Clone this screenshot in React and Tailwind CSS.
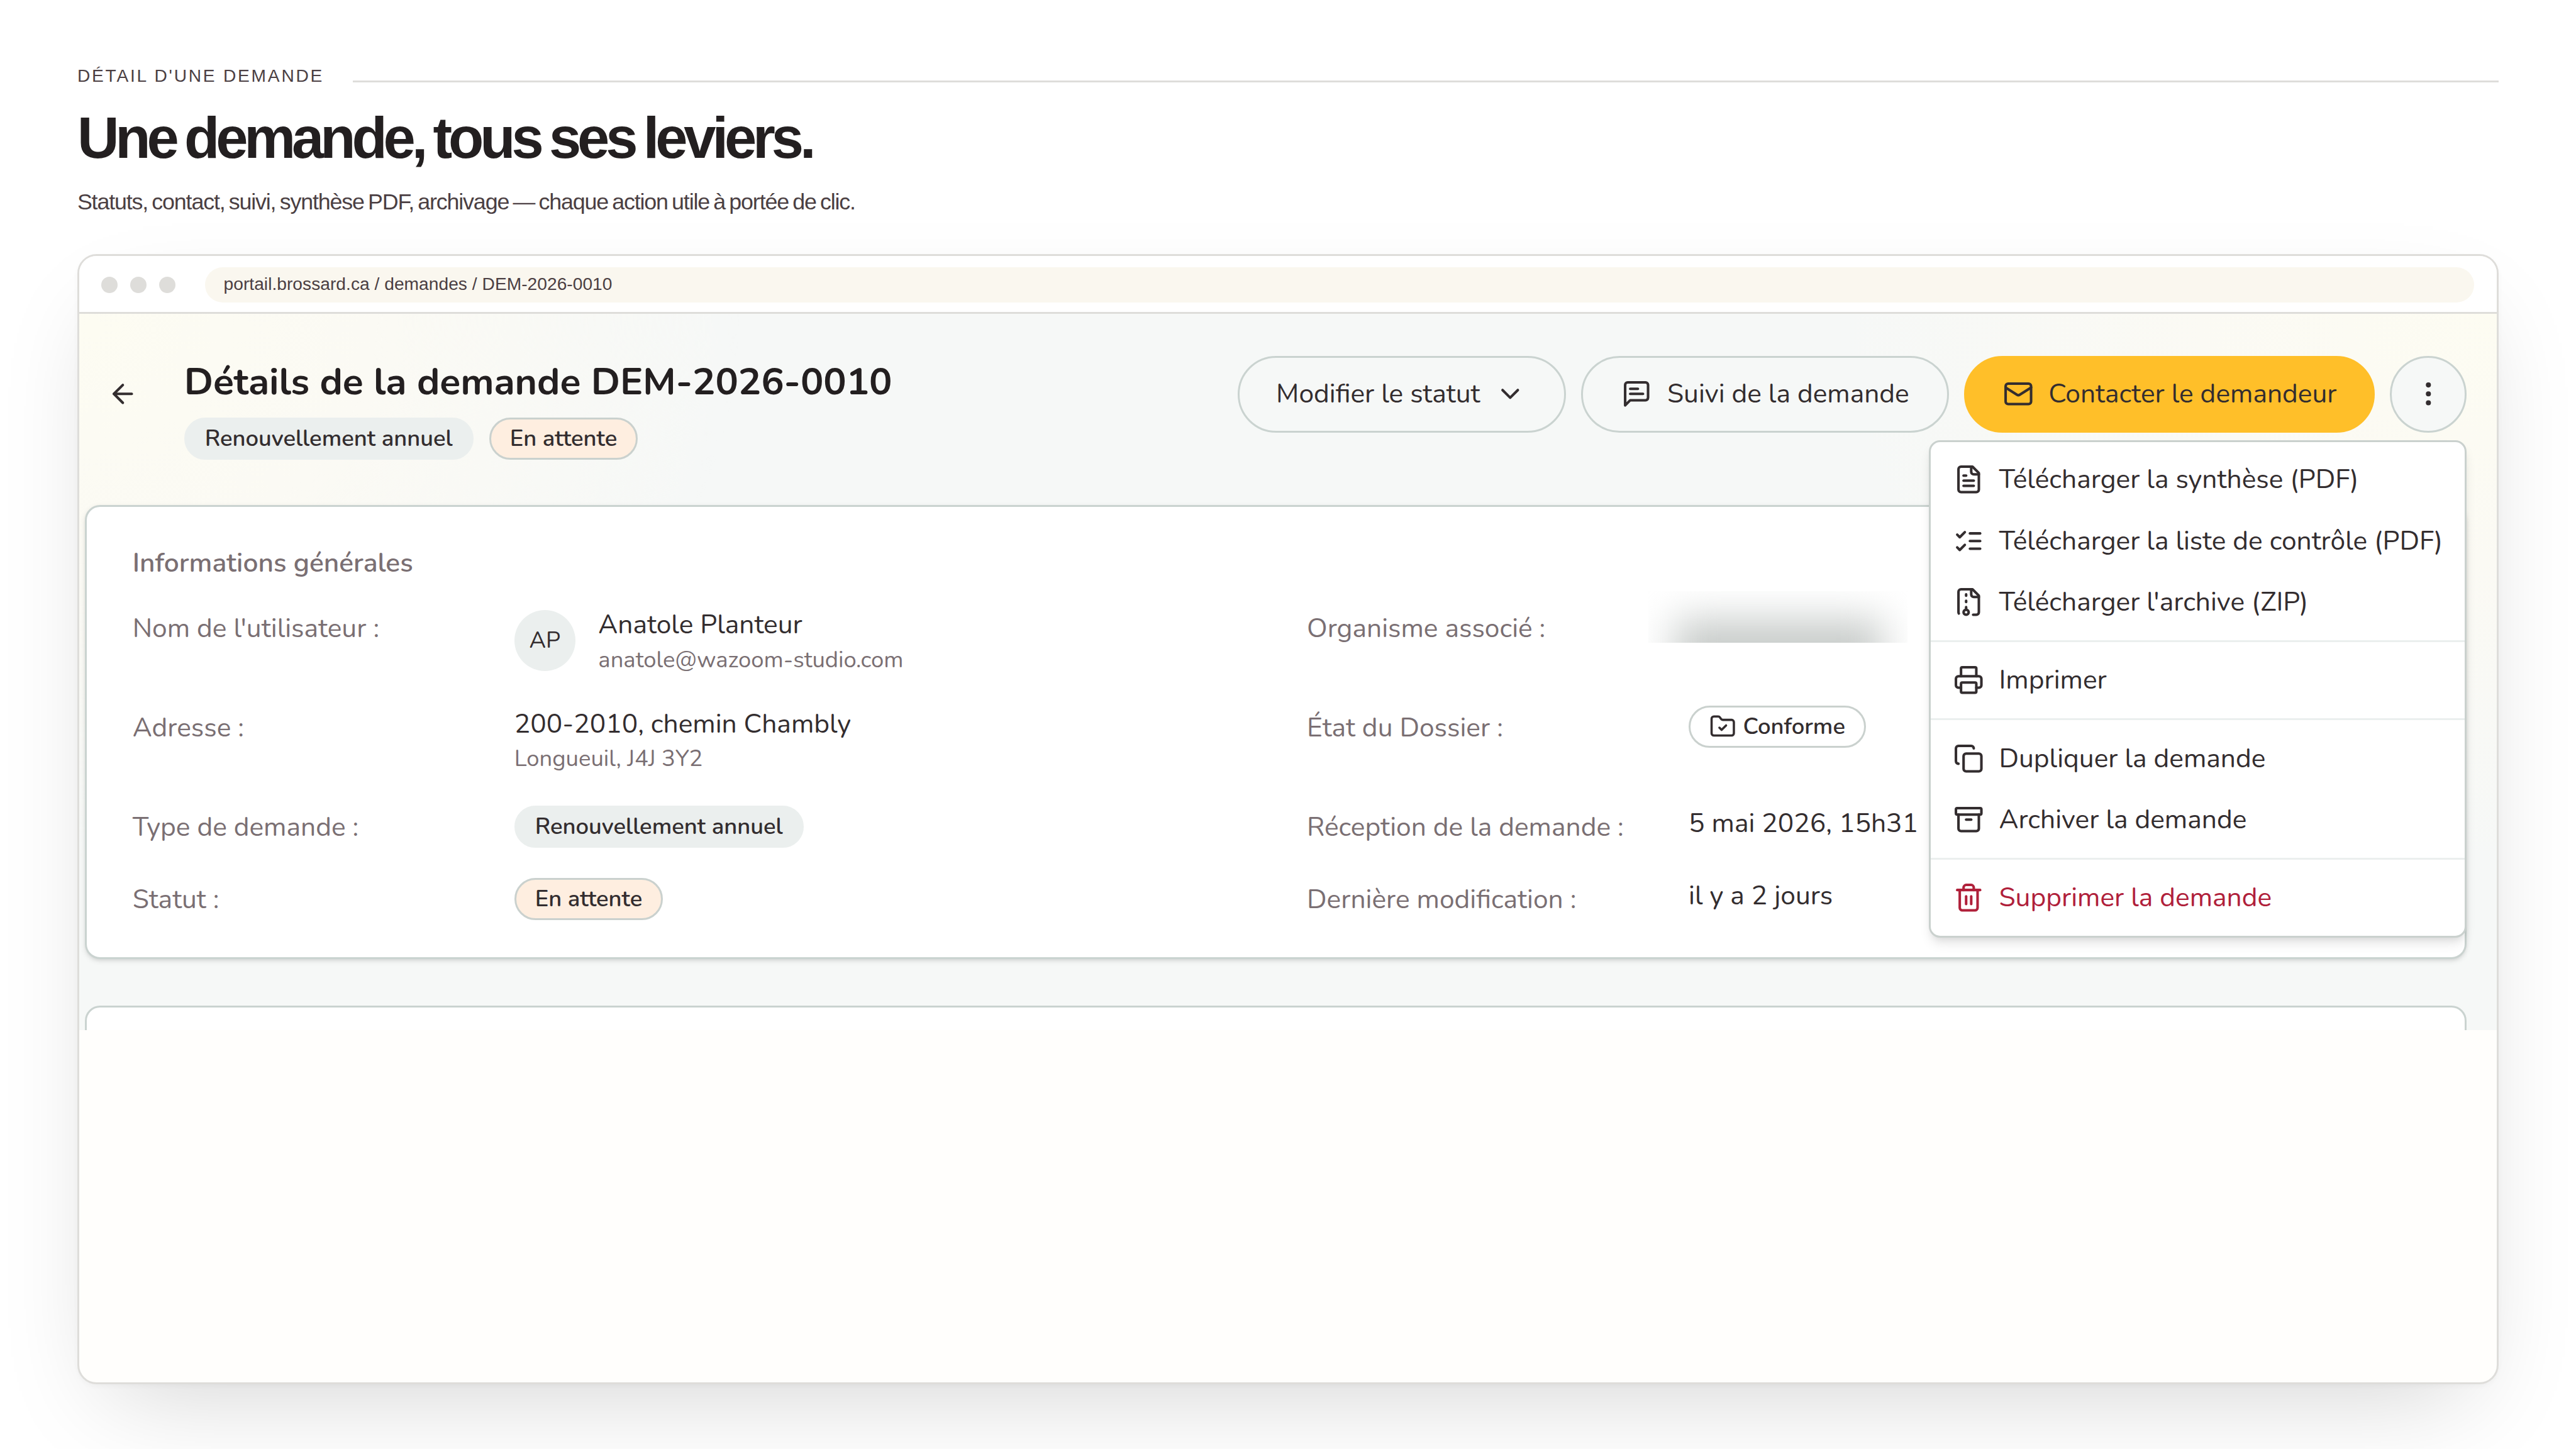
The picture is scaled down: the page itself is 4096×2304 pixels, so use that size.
const ICONS = {
  arrowLeft: (
    <>
      <path d="m12 19-7-7 7-7" />
      <path d="M19 12H5" />
    </>
  ),
  chevronDown: <path d="m6 9 6 6 6-6" />,
  message: (
    <>
      <path d="M21 15a2 2 0 0 1-2 2H7l-4 4V5a2 2 0 0 1 2-2h14a2 2 0 0 1 2 2z" />
      <path d="M13 8H7" />
      <path d="M17 12H7" />
    </>
  ),
  mail: (
    <>
      <rect width="20" height="16" x="2" y="4" rx="2" />
      <path d="m22 7-8.97 5.7a1.94 1.94 0 0 1-2.06 0L2 7" />
    </>
  ),
  more: (
    <>
      <circle cx="12" cy="12" r="1" />
      <circle cx="12" cy="5" r="1" />
      <circle cx="12" cy="19" r="1" />
    </>
  ),
  fileText: (
    <>
      <path d="M15 2H6a2 2 0 0 0-2 2v16a2 2 0 0 0 2 2h12a2 2 0 0 0 2-2V7Z" />
      <path d="M14 2v4a2 2 0 0 0 2 2h4" />
      <path d="M10 9H8" />
      <path d="M16 13H8" />
      <path d="M16 17H8" />
    </>
  ),
  listChecks: (
    <>
      <path d="m3 17 2 2 4-4" />
      <path d="m3 7 2 2 4-4" />
      <path d="M13 6h8" />
      <path d="M13 12h8" />
      <path d="M13 18h8" />
    </>
  ),
  fileArchive: (
    <>
      <path d="M10 12v-1" />
      <path d="M10 18v-2" />
      <path d="M10 7V6" />
      <path d="M14 2v4a2 2 0 0 0 2 2h4" />
      <path d="M15.5 22H18a2 2 0 0 0 2-2V7l-5-5H6a2 2 0 0 0-2 2v16a2 2 0 0 0 .274 1.01" />
      <circle cx="10" cy="20" r="2" />
    </>
  ),
  printer: (
    <>
      <path d="M6 18H4a2 2 0 0 1-2-2v-5a2 2 0 0 1 2-2h16a2 2 0 0 1 2 2v5a2 2 0 0 1-2 2h-2" />
      <path d="M6 9V3a1 1 0 0 1 1-1h10a1 1 0 0 1 1 1v6" />
      <rect x="6" y="14" width="12" height="8" rx="1" />
    </>
  ),
  copy: (
    <>
      <rect width="14" height="14" x="8" y="8" rx="2" />
      <path d="M4 16c-1.1 0-2-.9-2-2V4c0-1.1.9-2 2-2h10c1.1 0 2 .9 2 2" />
    </>
  ),
  archive: (
    <>
      <rect width="20" height="5" x="2" y="3" rx="1" />
      <path d="M4 8v11a2 2 0 0 0 2 2h12a2 2 0 0 0 2-2V8" />
      <path d="M10 12h4" />
    </>
  ),
  trash: (
    <>
      <path d="M3 6h18" />
      <path d="M19 6v14c0 1-1 2-2 2H7c-1 0-2-1-2-2V6" />
      <path d="M8 6V4c0-1 1-2 2-2h4c1 0 2 1 2 2v2" />
      <path d="M10 11v6" />
      <path d="M14 11v6" />
    </>
  ),
  folderCheck: (
    <>
      <path d="M20 20a2 2 0 0 0 2-2V8a2 2 0 0 0-2-2h-7.9a2 2 0 0 1-1.69-.9L9.6 3.9A2 2 0 0 0 7.93 3H4a2 2 0 0 0-2 2v13a2 2 0 0 0 2 2Z" />
      <path d="m9 13 2 2 4-4" />
    </>
  ),
};

function Icon({ name, className = "size-[48.6px]" }) {
  return (
    <svg
      viewBox="0 0 24 24"
      fill="none"
      stroke="currentColor"
      strokeWidth="2"
      strokeLinecap="round"
      strokeLinejoin="round"
      className={`shrink-0 ${className}`}
    >
      {ICONS[name]}
    </svg>
  );
}

const badgeBase =
  "inline-flex h-[67px] items-center rounded-full border-[3px] text-[36.45px] leading-[48.6px] font-semibold text-[#332d2f]";

function TypeBadge() {
  return <span className={`${badgeBase} border-[#ebefee] bg-[#ebefee] px-[30px]`}>Renouvellement annuel</span>;
}

function StatusBadge() {
  return <span className={`${badgeBase} border-[#cad1ce] bg-[#feeee0] px-[30px]`}>En attente</span>;
}

function PillButton({ className, children }) {
  return (
    <button
      className={`flex h-[122px] items-center gap-[24px] rounded-full border-[3px] text-[42.5px] leading-[60.8px] whitespace-nowrap text-[#332d2f] ${className}`}
    >
      {children}
    </button>
  );
}

const MENU = [
  [
    { icon: "fileText", label: "Télécharger la synthèse (PDF)" },
    { icon: "listChecks", label: "Télécharger la liste de contrôle (PDF)" },
    { icon: "fileArchive", label: "Télécharger l'archive (ZIP)" },
  ],
  [{ icon: "printer", label: "Imprimer" }],
  [
    { icon: "copy", label: "Dupliquer la demande" },
    { icon: "archive", label: "Archiver la demande" },
  ],
  [{ icon: "trash", label: "Supprimer la demande", danger: true }],
];

function ActionsMenu() {
  return (
    <div className="absolute top-[200.5px] right-[48.3px] w-[854.5px] rounded-[18px] border-[3px] border-[#cad1ce] bg-white pt-[11.5px] pb-[12px] shadow-[0_12px_18px_-3px_rgba(0,0,0,0.1),0_6px_12px_-6px_rgba(0,0,0,0.1)]">
      {MENU.map((group, i) => (
        <div key={i}>
          {i > 0 && <div className="my-[12.15px] h-[3px] bg-[#ebefee]" />}
          {group.map((item) => (
            <div
              key={item.label}
              className={`flex h-[97.2px] items-center gap-[23.5px] pl-[36px] text-[42.5px] leading-[60.8px] whitespace-nowrap ${
                item.danger ? "text-[#b0203a]" : "text-[#332d2f]"
              }`}
            >
              <Icon name={item.icon} />
              {item.label}
            </div>
          ))}
        </div>
      ))}
    </div>
  );
}

function Row({ className, label1, value1, label2, value2 }) {
  return (
    <div
      className={`grid grid-cols-[607px_1260.4px_607px_1fr] items-start text-[42.5px] leading-[60.8px] whitespace-nowrap text-[#332d2f] ${className}`}
    >
      <div className="pt-[6px] text-[#7a6f73]">{label1}</div>
      <div>{value1}</div>
      <div className="pt-[6px] text-[#7a6f73]">{label2}</div>
      <div>{value2}</div>
    </div>
  );
}

function InfoCard() {
  return (
    <section className="mr-[48.3px] ml-[9px] h-[722px] rounded-[24px] border-[3px] border-[#cad3d0] bg-white pt-[59.5px] pl-[72.8px] shadow-[0_3px_9px_rgba(0,0,0,0.1),0_3px_6px_-3px_rgba(0,0,0,0.1)]">
      <h3 className="mb-[36.7px] text-[42.5px] leading-[60.8px] font-semibold text-[#7a6f73]">
        Informations générales
      </h3>
      <Row
        className="h-[157.6px]"
        label1="Nom de l'utilisateur :"
        value1={
          <div className="flex gap-[36.5px]">
            <div className="mt-[7px] flex size-[97.2px] items-center justify-center rounded-full bg-[#ebefee] text-[36.45px]">
              AP
            </div>
            <div>
              <div>Anatole Planteur</div>
              <div className="text-[36.45px] leading-[50px] text-[#7a6f73]">anatole@wazoom-studio.com</div>
            </div>
          </div>
        }
        label2="Organisme associé :"
        value2={
          <div className="-mt-[23px] -ml-[64px] h-[82.4px] w-[412px] overflow-hidden">
            <div className="mt-[44px] ml-[42px] h-[160px] w-[330px] bg-[#c8ccca] blur-[31px]" />
          </div>
        }
      />
      <Row
        className="h-[158px]"
        label1="Adresse :"
        value1={
          <div>
            <div>200-2010, chemin Chambly</div>
            <div className="text-[36.45px] leading-[50px] text-[#7a6f73]">Longueuil, J4J 3Y2</div>
          </div>
        }
        label2="État du Dossier :"
        value2={
          <div className="flex pt-[1.5px]">
            <span className={`${badgeBase} gap-[11px] border-[#cad1ce] bg-white px-[30px]`}>
              <Icon name="folderCheck" className="size-[42.5px]" />
              Conforme
            </span>
          </div>
        }
      />
      <Row
        className="h-[115px]"
        label1="Type de demande :"
        value1={
          <div className="flex pt-[2px]">
            <TypeBadge />
          </div>
        }
        label2="Réception de la demande :"
        value2="5 mai 2026, 15h31"
      />
      <Row
        className="h-[80px]"
        label1="Statut :"
        value1={
          <div className="flex pt-[2px]">
            <StatusBadge />
          </div>
        }
        label2="Dernière modification :"
        value2="il y a 2 jours"
      />
    </section>
  );
}

function RequestPage() {
  return (
    <main className="relative h-[1139.2px] overflow-hidden bg-[#f6f8f7] bg-[radial-gradient(1050px_880px_at_0_0,#fdfcf2_0%,#fbfaf4_45%,transparent_100%),radial-gradient(1050px_880px_at_100%_0,#fdfcf2_0%,#fbfaf4_45%,transparent_100%)] font-['Nunito','Noto_Sans',sans-serif]">
      <header className="flex h-[303.8px] items-start justify-between pt-[66.4px] pr-[48.3px] pl-[44.8px]">
        <div className="flex gap-[73.4px]">
          <Icon name="arrowLeft" className="mt-[36.6px] size-[48.6px] text-[#332d2f]" />
          <div className="pt-[4.5px]">
            <h2 className="text-[60.8px] leading-[74px] font-bold tracking-[-0.0015em] whitespace-nowrap text-[#231f20]">
              Détails de la demande DEM-2026-0010
            </h2>
            <div className="mt-[19.5px] flex gap-[25px]">
              <TypeBadge />
              <StatusBadge />
            </div>
          </div>
        </div>
        <div className="flex gap-[24.3px]">
          <PillButton className="w-[522px] border-[#cad3d0] bg-[#f6f8f7] pl-[58px]">
            Modifier le statut
            <Icon name="chevronDown" />
          </PillButton>
          <PillButton className="w-[584.5px] border-[#cad3d0] bg-[#f6f8f7] pl-[61px]">
            <Icon name="message" />
            Suivi de la demande
          </PillButton>
          <PillButton className="w-[652.4px] border-[#ffbf29] bg-[#ffbf29] pl-[58.5px]">
            <Icon name="mail" />
            Contacter le demandeur
          </PillButton>
          <button className="flex size-[122px] items-center justify-center rounded-full border-[3px] border-[#cad3d0] bg-[#f6f8f7] text-[#332d2f]">
            <Icon name="more" />
          </button>
        </div>
      </header>
      <InfoCard />
      <section className="mt-[74.2px] mr-[48.3px] ml-[9px] h-[300px] rounded-[24px] border-[3px] border-[#cad3d0] bg-white" />
      <ActionsMenu />
    </main>
  );
}

export default function App() {
  return (
    <div className="h-[2304px] w-[4096px] overflow-hidden bg-white px-[122.88px] pt-[100.5px] font-['Liberation_Sans',Arial,sans-serif]">
      <div className="flex h-[40px]">
        <span className="w-[437.7px] shrink-0 text-[28.16px] leading-[40px] tracking-[0.098em] whitespace-nowrap text-[#4b3f43]">
          DÉTAIL D'UNE DEMANDE
        </span>
        <span className="mt-[27.5px] h-[3px] flex-1 bg-[#deddda]" />
      </div>
      <h1 className="mt-[29px] text-[92.16px] leading-[100px] font-bold tracking-[-0.0665em] [word-spacing:-0.055em] whitespace-nowrap text-[#231f20]">
        Une demande, tous ses leviers.
      </h1>
      <p className="mt-[27.9px] text-[35.84px] leading-[48px] tracking-[-0.0325em] [word-spacing:-0.07em] whitespace-nowrap text-[#4b3f43]">
        Statuts, contact, suivi, synthèse PDF, archivage — chaque action utile à portée de clic.
      </p>
      <div className="mt-[59.1px] h-[1797px] overflow-hidden rounded-[30.7px] border-[3px] border-[#deddda] bg-[#fffefc] shadow-[0_61px_154px_-51px_rgba(0,0,0,0.18),0_3px_8px_rgba(0,0,0,0.03)]">
        <div className="flex h-[91.7px] items-start border-b-[3px] border-[#deddda] bg-white pt-[17.5px] pr-[36px] pl-[35.4px]">
          <div className="flex h-[56.3px] items-center gap-[20.5px]">
            <span className="size-[25.6px] rounded-full bg-[#deddda]" />
            <span className="size-[25.6px] rounded-full bg-[#deddda]" />
            <span className="size-[25.6px] rounded-full bg-[#deddda]" />
          </div>
          <div className="ml-[46.5px] flex h-[56.3px] flex-1 items-center rounded-full bg-[#faf7ef] pb-[3px] pl-[30px] text-[28.16px] tracking-[0.001em] text-[#4b3f43]">
            portail.brossard.ca / demandes / DEM-2026-0010
          </div>
        </div>
        <RequestPage />
      </div>
    </div>
  );
}
